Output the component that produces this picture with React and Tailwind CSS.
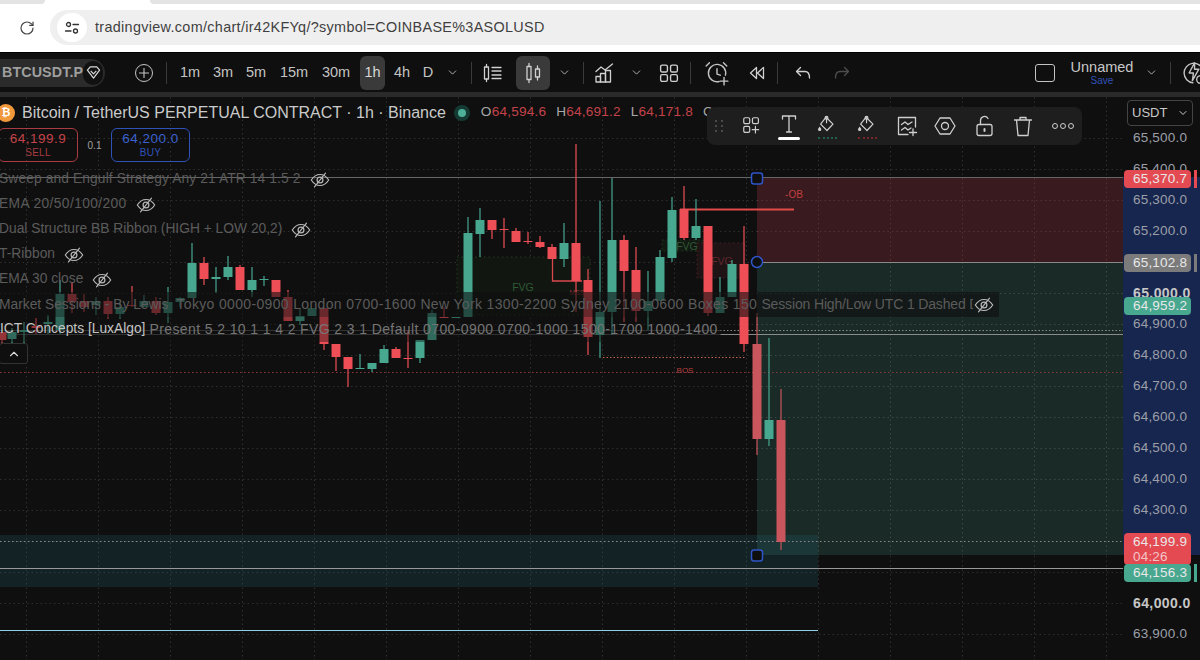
import { ChevronDown, ChevronUp, RotateCw } from 'lucide-react';

const GREEN = '#47a78f';
const RED = '#ee4f57';
const DIM_RED = '#c9565d';

// x, body top, body bottom, wick top, wick bottom, up?, colour override
const candles = [
  [2, 332, 340, 332, 345, 0],
  [12, 332, 339, 328, 345, 1],
  [24, 330, 332, 322, 345, 1],
  [36, 326, 328, 318, 334, 0],
  [48, 322, 324, 315, 334, 1],
  [60, 294, 330, 280, 334, 1],
  [72, 294, 302, 283, 313, 0],
  [84, 301, 307, 294, 312, 0],
  [96, 301, 305, 297, 315, 1],
  [108, 301, 314, 297, 319, 0],
  [120, 307, 314, 302, 319, 1],
  [132, 305, 306, 286, 307, 0],
  [144, 301, 307, 295, 307, 1],
  [156, 301, 313, 297, 315, 0],
  [168, 302, 313, 287, 323, 1],
  [180, 298, 302, 297, 307, 1],
  [192, 263, 298, 243, 298, 1],
  [204, 263, 279, 257, 285, 0],
  [216, 277, 279, 267, 293, 1],
  [228, 267, 277, 256, 280, 1],
  [240, 267, 290, 265, 290, 0],
  [252, 280, 290, 267, 297, 1],
  [264, 279, 280, 276, 286, 1],
  [276, 280, 297, 280, 297, 0],
  [288, 297, 321, 290, 321, 0],
  [300, 316, 321, 309, 325, 1],
  [312, 308, 316, 308, 316, 1],
  [324, 308, 344, 308, 350, 0],
  [336, 344, 357, 344, 371, 0],
  [348, 357, 369, 357, 387, 0],
  [360, 368, 369, 354, 369, 1],
  [372, 363, 369, 363, 372, 1],
  [384, 349, 363, 345, 363, 1],
  [396, 349, 358, 347, 358, 0],
  [408, 358, 359, 330, 368, 0],
  [420, 340, 358, 340, 363, 1],
  [432, 313, 340, 310, 340, 1],
  [444, 317, 318, 307, 318, 0],
  [456, 317, 318, 317, 318, 1],
  [468, 233, 317, 217, 317, 1],
  [480, 220, 234, 208, 257, 1],
  [492, 220, 230, 220, 239, 0],
  [504, 229, 230, 218, 248, 0],
  [516, 231, 242, 228, 242, 0],
  [528, 241, 242, 232, 244, 0],
  [540, 242, 247, 236, 248, 0],
  [552, 247, 259, 244, 259, 0],
  [564, 243, 259, 223, 267, 1],
  [576, 243, 281, 144, 312, 0],
  [588, 280, 337, 269, 355, 0],
  [600, 312, 335, 201, 358, 1],
  [612, 240, 312, 178, 335, 1],
  [624, 240, 271, 235, 322, 0],
  [636, 270, 311, 247, 322, 0],
  [648, 301, 311, 271, 330, 1],
  [660, 257, 301, 250, 301, 1],
  [672, 210, 258, 197, 262, 1],
  [684, 209, 238, 186, 240, 0],
  [696, 226, 238, 199, 240, 1],
  [708, 226, 313, 226, 316, 0],
  [720, 297, 313, 277, 313, 1],
  [732, 264, 297, 260, 297, 1],
  [744, 264, 344, 226, 352, 0],
  [757, 344, 439, 313, 455, 0, DIM_RED],
  [769, 420, 439, 338, 446, 1],
  [781, 420, 542, 389, 550, 0, DIM_RED],
];

// blank entries are the ticks that sit behind a price tag
const ticks = [
  '65,500.0', '65,400.0', '65,300.0', '65,200.0', '', '65,000.0', '64,900.0', '64,800.0', '64,700.0',
  '64,600.0', '64,500.0', '64,400.0', '64,300.0', '', '', '64,000.0', '63,900.0',
];

const gridX = [26, 98, 170, 242, 314, 386, 458, 530, 602, 674, 746, 818, 890, 962, 1034, 1106];

const legend = [
  { label: 'Sweep and Engulf Strategy Any 21 ATR 14 1.5 2', track: 'tracking-[0.11px]' },
  { label: 'EMA 20/50/100/200', track: 'tracking-[0.38px]' },
  { label: 'Dual Structure BB Ribbon (HIGH + LOW 20,2)', track: 'tracking-[0px]' },
  { label: 'T-Ribbon', track: 'tracking-[0px]' },
  { label: 'EMA 30 close', track: 'tracking-[0px]' },
];

function Stroke({ size = 24, vb = 24, children, className = '' }) {
  return (
    <svg width={size} height={size} viewBox={`0 0 ${vb} ${vb}`} fill="none" stroke="currentColor" strokeWidth="1.3" strokeLinecap="round" strokeLinejoin="round" className={className}>
      {children}
    </svg>
  );
}

function EyeOff() {
  return (
    <Stroke size={22} className="text-[#b9b9b9] shrink-0">
      <path d="M2.500 12c2.600-4 5.800-6 9.500-6s6.900 2 9.500 6c-2.600 4-5.800 6-9.500 6s-6.900-2-9.500-6z" />
      <circle cx="12" cy="12" r="3.200" />
      <path d="M6 19.500 18 4.500" />
    </Stroke>
  );
}

function Divider({ className = '' }) {
  return <div className={`w-px h-[22px] bg-[#3a3a3a] shrink-0 ${className}`} />;
}

function Tf({ children, className = '' }) {
  return <div className={`h-full flex items-center justify-center text-[14.5px] text-[#c4c4c4] shrink-0 ${className}`}>{children}</div>;
}

function Cell({ children, className = '' }) {
  return <div className={`h-[34px] flex items-center justify-center shrink-0 rounded-md ${className}`}>{children}</div>;
}

function Chev({ className = '' }) {
  return (
    <div className={`w-5 flex justify-center shrink-0 text-[#c4c4c4] ${className}`}>
      <ChevronDown size={13} strokeWidth={1.6} />
    </div>
  );
}

function BrowserBar() {
  return (
    <div className="h-[52px] bg-white shrink-0">
      <div className="flex h-1">
        <div className="w-[45px] bg-[#e3e3e3] rounded-br-lg" />
        <div className="w-[105px] bg-white" />
        <div className="flex-1 bg-[#e3e3e3] rounded-bl-lg" />
      </div>
      <div className="flex items-center h-[35px] mt-1.5">
        <div className="w-[50px] flex justify-center shrink-0 pl-1 text-[#444]">
          <RotateCw size={16} strokeWidth={1.8} />
        </div>
        <div className="flex-1 h-[35px] bg-[#efefef] rounded-l-full flex items-center pl-[7px]">
          <div className="w-[30px] h-[29px] rounded-full bg-white flex items-center justify-center text-[#333]">
            <svg width="16" height="16" viewBox="0 0 16 16" fill="none" stroke="currentColor" strokeWidth="1.300" strokeLinecap="round">
              <circle cx="4.500" cy="4.500" r="2" />
              <path d="M9 4.500h5.500" />
              <circle cx="11.500" cy="11" r="2" />
              <path d="M1.500 11H7" />
            </svg>
          </div>
          <span className="ml-2 text-[14.4px] tracking-[0.32px] text-[#3f3f3f]">tradingview.com/chart/ir42KFYq/?symbol=COINBASE%3ASOLUSD</span>
        </div>
      </div>
    </div>
  );
}

function TopToolbar() {
  return (
    <div className="h-10 bg-[#0f0f0f] flex items-center shrink-0 overflow-hidden border-t border-black text-[#d0d0d0]">
      <div className="w-[106px] h-7 -ml-px bg-[#2b2b2b] rounded-r-full flex items-center justify-between shrink-0">
        <span className="pl-[3px] text-[14.3px] font-bold text-[#9f9f9f] tracking-[0.1px]">BTCUSDT.P</span>
        <div className="w-[24px] h-[24px] mr-0.5 rounded-full bg-[#111] flex items-center justify-center text-[#d8d8d8]">
          <svg width="15" height="15" viewBox="0 0 16 16" fill="none" stroke="currentColor" strokeWidth="1.300" strokeLinejoin="round">
            <path d="M1.500 5.500 4.500 2h7l3 3.500L8 14z" />
            <path d="M5 6.200 8 9.500l3-3.300" />
          </svg>
        </div>
      </div>
      <div className="ml-[30px] w-[18px] h-[18px] rounded-full border border-[#c4c4c4] flex items-center justify-center text-[#c4c4c4] shrink-0">
        <svg width="10" height="10" viewBox="0 0 10 10" stroke="currentColor" strokeWidth="1.100"><path d="M5 0v10M0 5h10" /></svg>
      </div>
      <Divider className="ml-[13px]" />
      <Tf className="ml-[7px] w-8">1m</Tf>
      <Tf className="ml-px w-8">3m</Tf>
      <Tf className="ml-px w-8">5m</Tf>
      <Tf className="ml-px w-[42px]">15m</Tf>
      <Tf className="w-[42px]">30m</Tf>
      <div className="ml-[3px] w-[25px] h-[34px] rounded-md bg-[#3a3a3a] flex items-center justify-center text-[14.5px] text-[#d8d8d8] shrink-0">1h</div>
      <Tf className="ml-[2px] w-[30px]">4h</Tf>
      <Tf className="w-[22px]">D</Tf>
      <Chev className="ml-[3px]" />
      <Divider className="ml-[9px]" />
      <Cell className="ml-1 w-[34px]">
        <Stroke size={24}>
          <rect x="3.500" y="6" width="4" height="12" />
          <path d="M5.500 3.500V6M5.500 18v2.500M11 6.500h9M11 10h9M11 14h9M11 17.500h9" />
        </Stroke>
      </Cell>
      <Cell className="ml-1.5 w-[34px] bg-[#3a3a3a]">
        <Stroke size={24}>
          <rect x="6" y="5.500" width="4" height="13" />
          <path d="M8 2.500v3M8 18.500v3" />
          <rect x="14.500" y="8" width="4" height="8" />
          <path d="M16.500 5v3M16.500 16v3" />
        </Stroke>
      </Cell>
      <Chev className="ml-1" />
      <Divider className="ml-[9px]" />
      <Cell className="ml-1 w-[34px]">
        <Stroke size={24}>
          <path d="M3 10.500 8 6l4 3 7.500-6" />
          <rect x="3" y="15.500" width="4.500" height="5.500" />
          <rect x="7.500" y="12.500" width="5" height="8.500" />
          <rect x="12.500" y="9.500" width="5" height="11.500" />
        </Stroke>
      </Cell>
      <Chev className="ml-1" />
      <Cell className="ml-1.5 w-[34px]">
        <Stroke size={22} vb={21}>
          <rect x="2.500" y="3" width="6.500" height="6.500" rx="1.500" />
          <rect x="12" y="3" width="6.500" height="6.500" rx="1.500" />
          <rect x="2.500" y="12" width="6.500" height="6.500" rx="1.500" />
          <rect x="12" y="12" width="6.500" height="6.500" rx="1.500" />
        </Stroke>
      </Cell>
      <Divider className="ml-1" />
      <Cell className="ml-[9px] w-[34px] text-[#c4c4c4]">
        <Stroke size={26}>
          <path d="M14 19.800A8 8 0 1 1 19.800 14" />
          <path d="M12 8v5l3 1M5 2.500 2 5.500M18 2.500l3 3M18.500 16v7M15 19.500h7" />
        </Stroke>
      </Cell>
      <Cell className="ml-1.5 w-[34px]">
        <Stroke size={20} vb={20}>
          <path d="M9.500 4.500 3.500 10l6 5.500zM16.500 4.500 10.500 10l6 5.500z" />
        </Stroke>
      </Cell>
      <Divider className="ml-[3px]" />
      <Cell className="ml-2 w-[34px]">
        <Stroke size={20} vb={20}>
          <path d="M7.500 4.500 3.500 8.500l4 4M3.500 8.500H12c3 0 4.500 2 4.500 6.500" />
        </Stroke>
      </Cell>
      <Cell className="ml-[5px] w-[34px] text-[#4d4d4d]">
        <Stroke size={20} vb={20}>
          <path d="M12.500 4.500l4 4-4 4M16.500 8.500H8c-3 0-4.500 2-4.500 6.500" />
        </Stroke>
      </Cell>
      <div className="ml-[176px] w-[20px] h-[18px] rounded-[3px] border border-[#c4c4c4] shrink-0" />
      <div className="ml-[17px] w-[60px] flex flex-col items-center shrink-0">
        <span className="text-[14.5px] leading-[15px] text-[#c8c8c8]">Unnamed</span>
        <span className="text-[10px] leading-[11px] text-[#2f52b8]">Save</span>
      </div>
      <Chev className="ml-[9px]" />
      <Divider className="ml-[9px]" />
      <div className="ml-[10px] text-[#c4c4c4] shrink-0">
        <Stroke size={26}>
          <path d="M20.500 9.500A9 9 0 1 0 11 21" />
          <path d="M12.500 2.500 7.500 12h4l-1 7 6-10.500h-4z" />
          <circle cx="18" cy="18" r="3.500" />
        </Stroke>
      </div>
    </div>
  );
}

function ChartDrawing() {
  return (
    <svg viewBox="0 97 1123 563" className="absolute inset-0 w-full h-full">
      <g stroke="#2f2f2f" strokeWidth="1" strokeDasharray="1.500 3">
        {gridX.map((x) => <line key={x} x1={x + 0.5} x2={x + 0.5} y1="97" y2="660" />)}
        {Array.from({ length: 17 }, (_, i) => 138 + i * 31).map((y) => <line key={y} x1="0" x2="1123" y1={y + 0.5} y2={y + 0.5} />)}
      </g>

      {/* position tool */}
      <rect x="757" y="178" width="366" height="84" fill="#391a1e" />
      <rect x="757" y="262" width="366" height="293" fill="#1a2a26" />
      <g stroke="#3d4a46" strokeWidth="1" strokeDasharray="1.500 3">
        {[818, 890, 962, 1034, 1106].map((x) => <line key={x} x1={x + 0.5} x2={x + 0.5} y1="262" y2="555" />)}
        {[293, 324, 355, 386, 417, 448, 479, 510].map((y) => <line key={y} x1="757" x2="1123" y1={y + 0.5} y2={y + 0.5} />)}
      </g>
      <g stroke="#54302f" strokeWidth="1" strokeDasharray="1.500 3">
        {[818, 890, 962, 1034, 1106].map((x) => <line key={x} x1={x + 0.5} x2={x + 0.5} y1="178" y2="262" />)}
        {[200, 231].map((y) => <line key={y} x1="757" x2="1123" y1={y + 0.5} y2={y + 0.5} />)}
      </g>
      <rect x="0" y="535" width="818" height="52" fill="#226a78" fillOpacity="0.22" />

      {/* fvg boxes */}
      <rect x="457" y="257" width="133" height="58" fill="#111611" stroke="#223c20" strokeDasharray="1.500 3" />
      <rect x="662" y="240" width="41" height="11" fill="#121812" stroke="#223c20" strokeDasharray="1.500 3" />
      <rect x="697" y="243" width="48" height="35" fill="#1e1315" stroke="#4e2024" strokeDasharray="1.500 3" />
      <text x="523" y="291" textAnchor="middle" fontSize="10.500" fill="#2f5a34">FVG</text>
      <text x="687" y="250" textAnchor="middle" fontSize="10.500" fill="#2f5a34">FVG</text>
      <text x="722" y="265" textAnchor="middle" fontSize="10.500" fill="#5e2a2e">FVG</text>
      <text x="577" y="295" textAnchor="middle" fontSize="7" fill="#8e3338">MSS</text>
      <text x="685" y="373" textAnchor="middle" fontSize="8" fill="#b8403f">BOS</text>
      <text x="794" y="198" textAnchor="middle" fontSize="10" fill="#c4403f">-OB</text>

      {/* level lines */}
      <line x1="0" x2="1123" y1="177.500" y2="177.500" stroke="#666" />
      <line x1="757" x2="1123" y1="262.500" y2="262.500" stroke="#8a8a8a" />
      <line x1="0" x2="720" y1="330.500" y2="330.500" stroke="#4a4a4a" />
      <line x1="0" x2="720" y1="334.500" y2="334.500" stroke="#4a4a4a" />
      <line x1="720" x2="1123" y1="330.500" y2="330.500" stroke="#8a8a8a" strokeDasharray="1.500 2" />
      <line x1="720" x2="1123" y1="334.500" y2="334.500" stroke="#8a8a8a" />
      <line x1="603" x2="745" y1="357.500" y2="357.500" stroke="#c2644f" strokeDasharray="1.500 2" />
      <line x1="0" x2="1123" y1="372.500" y2="372.500" stroke="#8a3a3d" strokeDasharray="1.500 2.500" />
      <line x1="0" x2="1123" y1="541.500" y2="541.500" stroke="#8a8a8a" strokeDasharray="1.500 2.500" />
      <line x1="0" x2="1123" y1="568.500" y2="568.500" stroke="#999" />
      <line x1="0" x2="818" y1="630.500" y2="630.500" stroke="#8fd0e8" />

      <path d="M552.500 259v22H582" fill="none" stroke="#d9484c" strokeWidth="1.300" />
      <line x1="680" x2="794" y1="209.500" y2="209.500" stroke="#e04a48" strokeWidth="2" />

      {candles.map(([x, top, bottom, wTop, wBottom, up, col]) => {
        const c = col || (up ? GREEN : RED);
        return (
          <g key={x}>
            <line x1={x} x2={x} y1={wTop} y2={wBottom} stroke={c} strokeWidth="1.200" />
            <rect x={x - 4.500} y={top} width="9" height={bottom - top} fill={c} />
          </g>
        );
      })}

      {/* handles */}
      <rect x="751.500" y="173" width="11" height="11" rx="2.500" fill="#0f0f0f" stroke="#2f55c8" strokeWidth="1.500" />
      <circle cx="757" cy="262" r="5.500" fill="#0f0f0f" stroke="#2f55c8" strokeWidth="1.500" />
      <rect x="751.500" y="550" width="11" height="11" rx="2.500" fill="#0f0f0f" stroke="#2f55c8" strokeWidth="1.500" />
    </svg>
  );
}

function Legend() {
  return (
    <div className="absolute left-0 top-[3px] right-0 flex flex-col">
      <div className="h-[25px] flex items-center">
        <div className="w-[18px] h-[18px] -ml-[3px] rounded-full bg-[#f0983a] flex items-center justify-center text-[11px] font-bold text-white shrink-0">₿</div>
        <span className="ml-[7px] text-[16px] text-[#cacaca] whitespace-nowrap">Bitcoin / TetherUS PERPETUAL CONTRACT · 1h · Binance</span>
        <div className="ml-2 w-4 h-4 rounded-full bg-[#153a33] flex items-center justify-center shrink-0">
          <div className="w-2 h-2 rounded-full bg-[#4fb09a]" />
        </div>
        <div className="ml-[11px] flex text-[13.600px] text-[#c4434a] whitespace-nowrap tracking-[0.2px]">
          <span className="text-[#a8a8a8]">O</span>64,594.6
          <span className="ml-[10px] text-[#a8a8a8]">H</span>64,691.2
          <span className="ml-[10px] text-[#a8a8a8]">L</span>64,171.8
          <span className="ml-[10px] text-[#a8a8a8]">C</span>
        </div>
      </div>
      <div className="flex items-center h-[34px] mt-[3px]">
        <div className="w-[80px] h-[34px] -ml-[2px] rounded-md border border-[#a83c42] flex flex-col items-center justify-center">
          <span className="text-[13.500px] leading-[15px] font-medium text-[#c4434a] tracking-[0.5px]">64,199.9</span>
          <span className="text-[10px] leading-[13px] text-[#a83c42] tracking-[0.3px]">SELL</span>
        </div>
        <span className="w-[33px] text-center text-[10px] text-[#a0a0a0]">0.1</span>
        <div className="w-[79px] h-[34px] rounded-md border border-[#2f52b8] flex flex-col items-center justify-center">
          <span className="text-[13.500px] leading-[15px] font-medium text-[#3a62cf] tracking-[0.5px]">64,200.0</span>
          <span className="text-[10px] leading-[13px] text-[#2f52b8] tracking-[0.3px]">BUY</span>
        </div>
      </div>
      <div className="flex flex-col mt-[5px] text-[13.800px] text-[#5b5b5b] whitespace-nowrap">
        {legend.map((row) => (
          <div key={row.label} className="h-[25px] flex items-center -ml-px">
            <span className={row.track}>{row.label}</span>
            <span className="ml-2"><EyeOff /></span>
          </div>
        ))}
        <div className="h-[25px] w-[1000px] flex items-center bg-[#0f0f0f]/60 -ml-px text-[14px]">
          <div className="flex-1 min-w-0 overflow-hidden">
            <span className="text-[13.800px]">Market Sessions - By Lewis</span>
            <span className="ml-2 tracking-[0.34px]">Tokyo 0000-0900 London 0700-1600 New York 1300-2200 Sydney 2100-0600 Boxes 150 </span>
            <span className="tracking-[-0.15px]">Session High/Low UTC 1 Dashed D</span>
          </div>
          <span className="mr-[4px]"><EyeOff /></span>
        </div>
        <div className="h-[25px] w-[721px] flex items-center bg-[#0f0f0f]/40">
          <span className="text-[#c4c4c4]">ICT Concepts [LuxAlgo]</span>
          <span className="ml-1 text-[14px] tracking-[0.39px] text-[#757575]">Present 5 2 10 1 1 4 2 FVG 2 3 1 Default 0700-0900 0700-1000 1500-1700 1000-1400</span>
        </div>
        <div className="mt-[1px] -ml-[1px] w-[29px] h-[21px] rounded-[3px] border border-[#333] bg-[#0f0f0f] flex items-center justify-center text-[#d8d8d8]">
          <ChevronUp size={14} strokeWidth={2} />
        </div>
      </div>
    </div>
  );
}

function Bucket({ stripe }) {
  return (
    <div className="w-[26px] flex flex-col items-center shrink-0">
      <Stroke size={22}>
        <path d="M11 3.500 18.500 11 12 18l-7-7z" />
        <circle cx="11.500" cy="4" r="1.500" />
        <path d="M11.500 5.500v4" />
        <path d="M4 13.500c-1 1.500-1.800 2.300-1.800 3.300a1.800 1.800 0 0 0 3.600 0c0-1-.8-1.800-1.800-3.300z" fill="currentColor" stroke="none" />
      </Stroke>
      <div className={`w-[19px] h-0 mt-[1px] border-t-2 border-dotted ${stripe}`} />
    </div>
  );
}

function DrawingToolbar() {
  return (
    <div className="absolute left-[707px] top-[10px] w-[375px] h-[38px] rounded-lg bg-[#1e1e1e] flex items-center text-[#cfcfcf]">
      <div className="ml-[8px] grid grid-cols-2 gap-x-[4px] gap-y-[3px] w-[8px] shrink-0">
        {[0, 1, 2, 3, 4, 5].map((i) => <div key={i} className="w-[2px] h-[2px] bg-[#4a4a4a]" />)}
      </div>
      <div className="ml-[18px] shrink-0">
        <Stroke size={22}>
          <rect x="3" y="3" width="6.500" height="6.500" rx="1.500" />
          <rect x="12.500" y="3" width="6.500" height="6.500" rx="1.500" />
          <rect x="3" y="12.500" width="6.500" height="6.500" rx="1.500" />
          <path d="M15.750 12.500v7M12.250 16h7" />
        </Stroke>
      </div>
      <div className="ml-[14px] w-[24px] flex flex-col items-center shrink-0">
        <Stroke size={24}>
          <path d="M5.500 6V3h13v3M12 3v16M9.500 19h5" />
        </Stroke>
        <div className="w-[22px] h-[3px] rounded-full bg-white" />
      </div>
      <div className="ml-[13px]"><Bucket stripe="border-[#1f5f50]" /></div>
      <div className="ml-[14px]"><Bucket stripe="border-[#7a2429]" /></div>
      <div className="ml-[15px] shrink-0">
        <Stroke size={24}>
          <path d="M13 20.500H3.500V3.500h17V13" />
          <path d="M6.500 10.500 10 8l3 2.500L17 8M6.500 16l3.500-2.500 3 2.500 3-2" />
          <path d="M18 15v6.500M14.500 18.500h7" />
        </Stroke>
      </div>
      <div className="ml-[14px] shrink-0">
        <Stroke size={24}>
          <path d="M7 4h10l5 8-5 8H7l-5-8z" />
          <circle cx="12" cy="12" r="3.500" />
        </Stroke>
      </div>
      <div className="ml-[16px] shrink-0">
        <Stroke size={24}>
          <rect x="4" y="10.500" width="15" height="11" rx="2" />
          <path d="M7.500 10.500V6.500a4 4 0 0 1 7.500-2" />
          <path d="M11.500 15v2" strokeWidth="2" />
        </Stroke>
      </div>
      <div className="ml-[14px] shrink-0">
        <Stroke size={24}>
          <path d="M3.500 6h17M9 6V3.500h6V6M5.500 6l1.500 15.500h10L18.500 6" />
        </Stroke>
      </div>
      <div className="ml-[17px] flex gap-[2px] shrink-0">
        {[0, 1, 2].map((i) => <div key={i} className="w-[6px] h-[6px] rounded-full border border-[#cfcfcf]" />)}
      </div>
    </div>
  );
}

function PriceTag({ className = '', children }) {
  return (
    <div className={`absolute left-px w-[67px] pl-[9px] rounded-sm flex flex-col items-start justify-center text-[13.500px] text-[#e8e8e8] tracking-[0.2px] ${className}`}>
      {children}
    </div>
  );
}

function PriceAxis() {
  return (
    <div className="relative w-[77px] bg-[#0f0f0f] shrink-0 overflow-hidden">
      <div className="absolute left-0 right-0 top-[80px] h-[378px] bg-[#17264f]" />
      <div className="relative flex flex-col pt-[25.500px]">
        {ticks.map((t, i) => (
          <div key={i} className={`h-[31px] flex items-center pl-[10px] ${t === '65,000.0' || t === '64,000.0' ? 'text-[14px] tracking-[0.4px] text-[#c6c6c6] font-bold' : 'text-[13.500px] tracking-[0.2px] text-[#9c9fa8]'}`}>
            {t}
          </div>
        ))}
      </div>
      <div className="absolute left-[4px] top-[3px] w-[66px] h-[26px] rounded border border-[#444] bg-[#0f0f0f] flex items-center justify-between pl-[4px] pr-[3px] text-[13px] text-[#c8c8c8]">
        USDT
        <ChevronDown size={12} strokeWidth={2} />
      </div>
      <PriceTag className="top-[73px] h-[18px] bg-[#e44a52]">65,370.7</PriceTag>
      <PriceTag className="top-[157px] h-[18px] bg-[#7b7b7b]">65,102.8</PriceTag>
      <PriceTag className="top-[200px] h-[18px] bg-[#47a78f]">64,959.2</PriceTag>
      <PriceTag className="top-[436px] h-[32px] bg-[#e44a52] leading-[15px]">
        <span>64,199.9</span>
        <span className="text-[#f3c4c6]">04:26</span>
      </PriceTag>
      <PriceTag className="top-[467px] h-[18px] bg-[#47a78f]">64,156.3</PriceTag>
      <div className="absolute left-[71px] top-[73px] w-[3px] h-[18px] bg-[#e44a52]" />
      <div className="absolute left-[71px] top-[157px] w-[3px] h-[18px] bg-[#7b7b7b]" />
      <div className="absolute left-[71px] top-[467px] w-[3px] h-[18px] bg-[#47a78f]" />
    </div>
  );
}

export default function App() {
  return (
    <div className="w-[1200px] h-[660px] overflow-hidden flex flex-col bg-[#0f0f0f] font-['Liberation_Sans','Arial',sans-serif]">
      <BrowserBar />
      <TopToolbar />
      <div className="h-[5px] bg-[#2a2a2a] shrink-0" />
      <div className="flex-1 flex min-h-0">
        <div className="relative flex-1 overflow-hidden">
          <ChartDrawing />
          <Legend />
          <DrawingToolbar />
        </div>
        <PriceAxis />
      </div>
    </div>
  );
}
